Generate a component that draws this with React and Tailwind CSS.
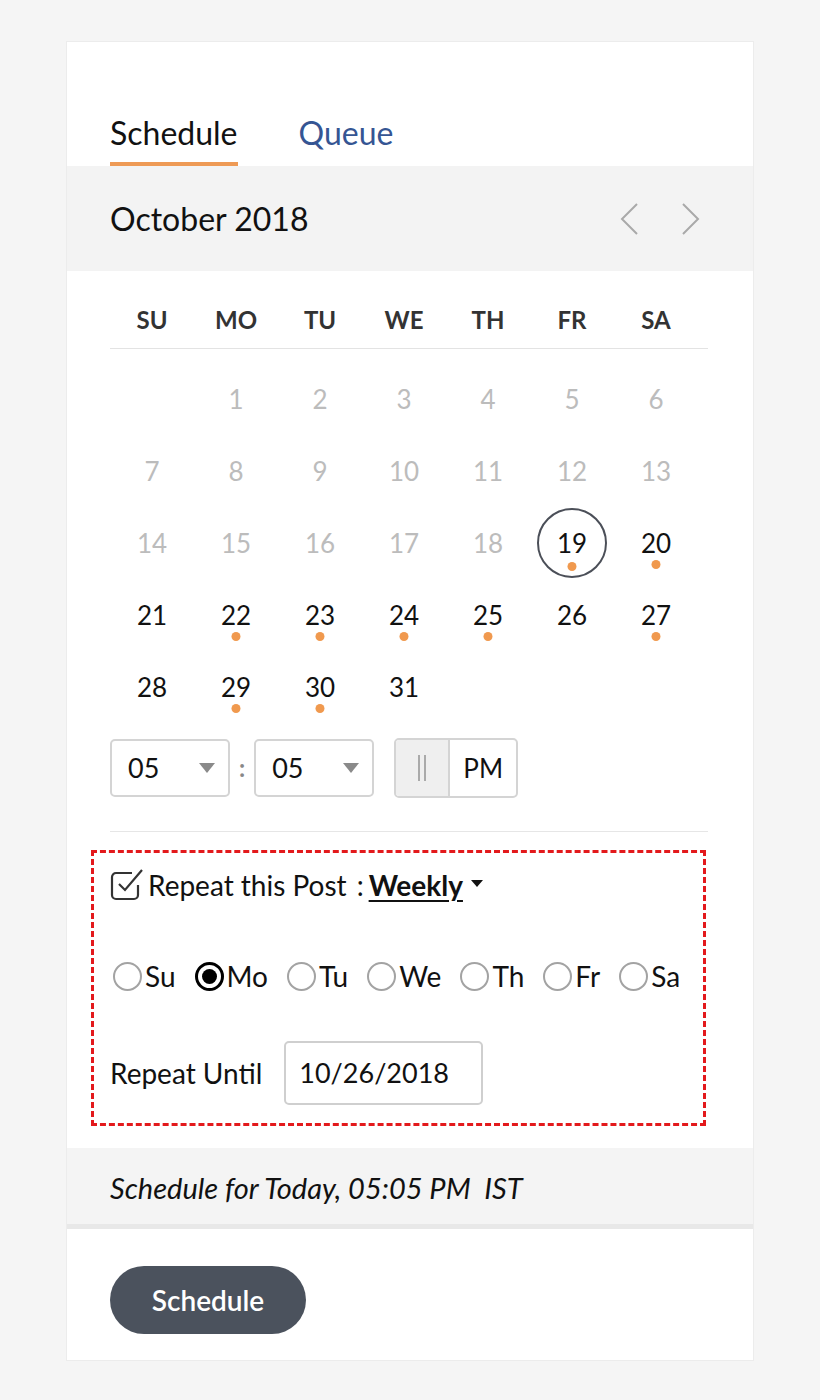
import { useState } from 'react'

const weekdays = ['SU', 'MO', 'TU', 'WE', 'TH', 'FR', 'SA']

// October 2018 starts on a Monday
const cells = [null, ...Array.from({ length: 31 }, (_, i) => i + 1)]
const dotted = [19, 20, 22, 23, 24, 25, 27, 29, 30]
const today = 19

function Chevron({ dir }) {
  return (
    <svg width="22" height="34" viewBox="0 0 22 34" fill="none" stroke="#a9a9a9" strokeWidth="2">
      {dir === 'left' ? <path d="M19 2 L4 17 L19 32" /> : <path d="M3 2 L18 17 L3 32" />}
    </svg>
  )
}

function Caret() {
  return (
    <svg width="16" height="10" viewBox="0 0 16 10">
      <path d="M0 0 H16 L8 10 Z" fill="#8a8a8a" />
    </svg>
  )
}

function TimeSelect({ value }) {
  return (
    <div className="flex items-center justify-between w-[120px] h-[58px] border-2 border-[#d4d4d4] rounded-[5px] pl-[16px] pr-[13px] bg-white">
      <span className="text-[27px] text-[#111]">{value}</span>
      <Caret />
    </div>
  )
}

function Radio({ label, checked }) {
  return (
    <label className="flex items-center">
      <span
        className={
          checked
            ? 'w-[29px] h-[29px] rounded-full border-[3px] border-black flex items-center justify-center'
            : 'w-[29px] h-[29px] rounded-full border-2 border-[#a3a3a3]'
        }
      >
        {checked && <span className="w-[15px] h-[15px] rounded-full bg-black" />}
      </span>
      <span className="text-[28px] text-[#111] ml-[3px]">{label}</span>
    </label>
  )
}

export default function App() {
  const [tab] = useState('schedule')

  return (
    <div className="min-h-[1400px] bg-[#f5f5f5] pt-[41px] font-['Lato','Open_Sans',sans-serif]">
      <div className="mx-auto w-[688px] bg-white border border-[#ececec]">
        {/* tabs */}
        <div className="h-[124px] flex items-end gap-[61px] px-[43px]">
          <div className={tab === 'schedule' ? 'pb-[5px] border-b-[4px] border-[#ee9a55] text-[32px] text-[#111]' : ''}>
            Schedule
          </div>
          <div className="pb-[9px] text-[32px] text-[#355593]">Queue</div>
        </div>

        {/* month header */}
        <div className="h-[105px] bg-[#f3f3f3] flex items-center justify-between pl-[43px] pr-[51px]">
          <span className="text-[32px] text-[#111]">October 2018</span>
          <div className="flex items-center gap-[40px]">
            <Chevron dir="left" />
            <Chevron dir="right" />
          </div>
        </div>

        <div className="px-[43px]">
          <div className="w-[598px]">
            <div className="grid grid-cols-[repeat(7,84px)] h-[78px] items-center border-b border-[#e3e3e3] pt-[20px]">
              {weekdays.map((d) => (
                <div key={d} className="text-center text-[24px] font-bold text-[#333]">
                  {d}
                </div>
              ))}
            </div>

            <div className="grid grid-cols-[repeat(7,84px)] pt-[14px]">
              {cells.map((n, i) => (
                <div key={i} className="h-[72px] flex items-center justify-center">
                  {n && (
                    <div
                      className={
                        n === today
                          ? 'relative w-[70px] h-[70px] rounded-full border-2 border-[#4b4f58] flex items-center justify-center'
                          : 'relative w-[70px] h-[70px] flex items-center justify-center'
                      }
                    >
                      <span className={n < today ? 'text-[26px] text-[#bcbcbc]' : 'text-[26px] text-[#111]'}>{n}</span>
                      {dotted.includes(n) && (
                        <span className="absolute left-1/2 -translate-x-1/2 top-[52px] w-[9px] h-[9px] rounded-full bg-[#f0994e]" />
                      )}
                    </div>
                  )}
                </div>
              ))}
            </div>

            {/* time */}
            <div className="flex items-center pt-[15px] pb-[33px] border-b border-[#e6e6e6]">
              <TimeSelect value="05" />
              <span className="mx-[9px] text-[24px] text-[#888] font-bold">:</span>
              <TimeSelect value="05" />
              <div className="ml-[20px] flex h-[60px] w-[124px] border-2 border-[#d4d4d4] rounded-[5px] overflow-hidden">
                <div className="w-[54px] bg-[#efefef] border-r-2 border-[#d4d4d4] flex items-center justify-center gap-[4px]">
                  <span className="w-[2px] h-[26px] bg-[#aaa]" />
                  <span className="w-[2px] h-[26px] bg-[#aaa]" />
                </div>
                <div className="flex-1 flex items-center justify-center text-[26px] text-[#111]">PM</div>
              </div>
            </div>
          </div>
        </div>

        {/* repeat box */}
        <div className="pl-[24px] pr-[47px] pt-[18px] pb-[22px]">
          <div className="border-[3px] border-dashed border-[#e3191c] pl-[16px] pr-[9px] pt-[15px] pb-[18px]">
            <div className="flex items-center h-[34px]">
              <svg width="34" height="32" viewBox="0 0 34 32" fill="none" stroke="#333" strokeWidth="2.2">
                <path d="M22 4 H6 a4 4 0 0 0 -4 4 v18 a4 4 0 0 0 4 4 h18 a4 4 0 0 0 4 -4 v-10" />
                <path d="M9 15 L15 21 L32 1" />
              </svg>
              <span className="text-[28px] text-[#111] ml-[4px]">Repeat this Post</span>
              <span className="text-[28px] text-[#111] ml-[10px]">:</span>
              <span className="text-[28px] font-bold text-[#111] underline underline-offset-[4px] ml-[5px]">Weekly</span>
              <svg width="12" height="8" viewBox="0 0 12 8" className="ml-[8px] mb-[2px]">
                <path d="M0 0 H12 L6 7 Z" fill="#111" />
              </svg>
            </div>

            <div className="flex items-center gap-[19px] h-[42px] mt-[53px] pl-[3px]">
              <Radio label="Su" />
              <Radio label="Mo" checked />
              <Radio label="Tu" />
              <Radio label="We" />
              <Radio label="Th" />
              <Radio label="Fr" />
              <Radio label="Sa" />
            </div>

            <div className="flex items-center mt-[44px]">
              <span className="text-[28px] text-[#111]">Repeat Until</span>
              <div className="ml-[22px] w-[199px] h-[64px] border-2 border-[#cfcfcf] rounded-[5px] flex items-center pl-[13px] text-[27px] text-[#111]">
                10/26/2018
              </div>
            </div>
          </div>
        </div>

        {/* summary */}
        <div className="h-[81px] bg-[#f4f4f4] border-b-[5px] border-[#e8e8e8] flex items-center pt-[4px] px-[43px]">
          <span className="italic text-[29px] text-[#111]">Schedule for Today, 05:05 PM&nbsp; IST</span>
        </div>

        <div className="px-[43px] pt-[37px] pb-[26px]">
          <button className="h-[68px] w-[196px] rounded-full bg-[#4b525d] text-white text-[28px] font-semibold">
            Schedule
          </button>
        </div>
      </div>
    </div>
  )
}
